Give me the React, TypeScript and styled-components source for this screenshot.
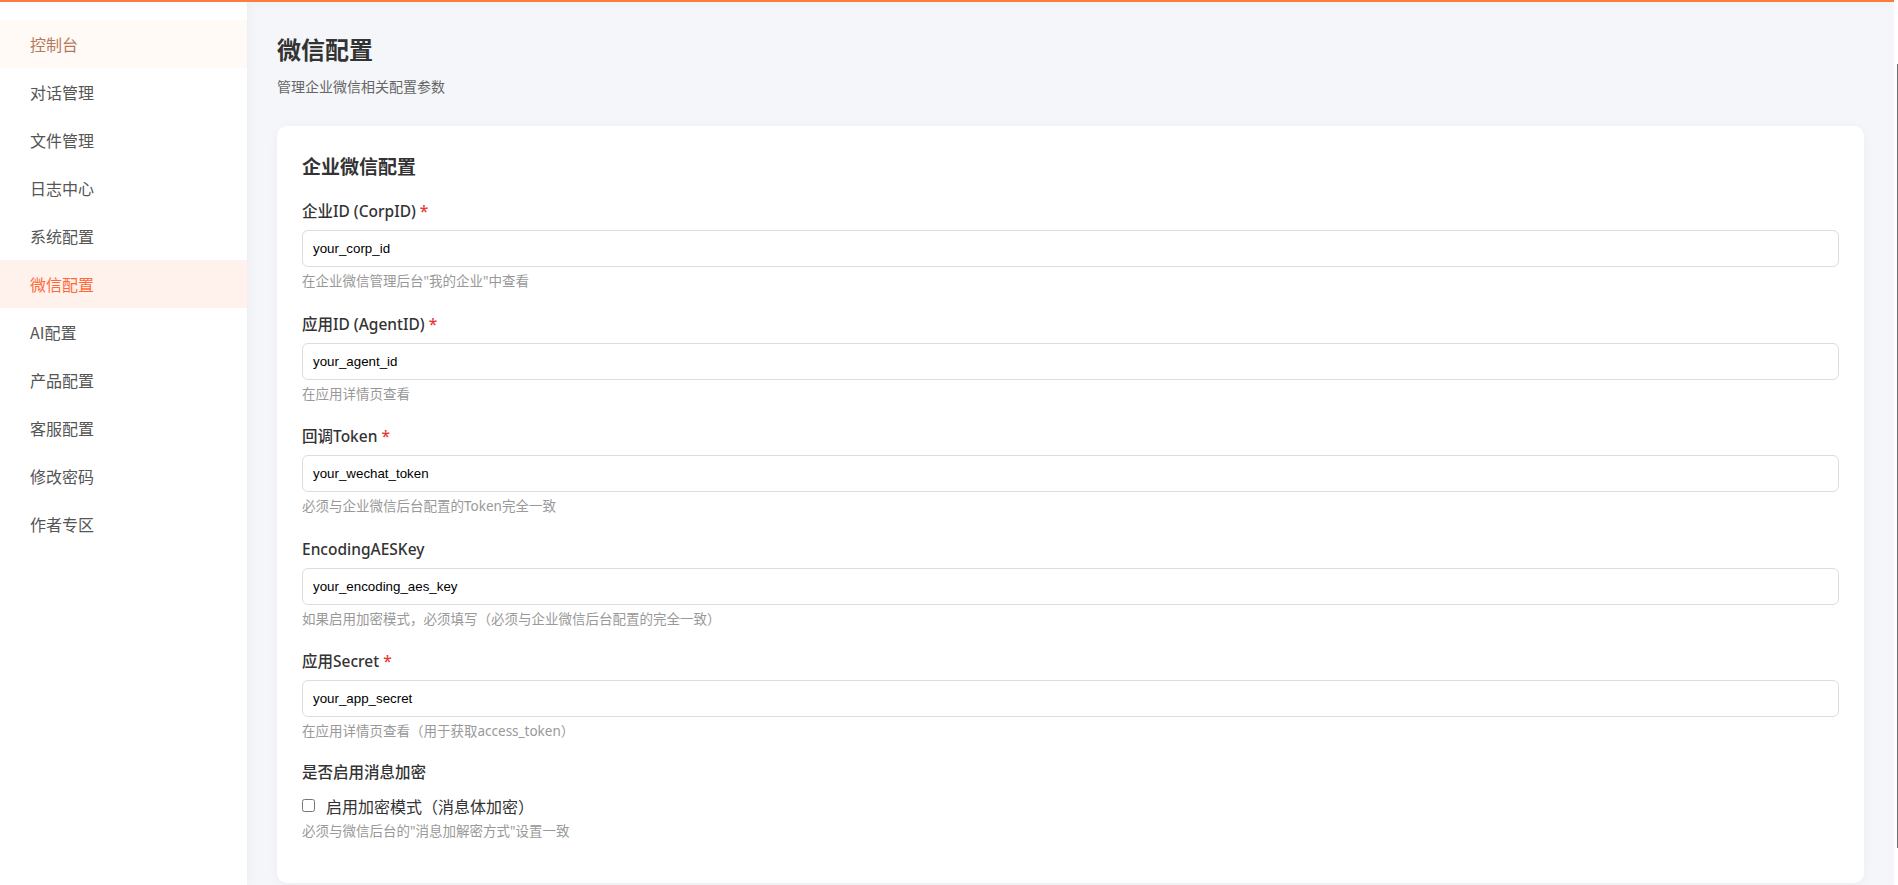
import React from "react";
import styled, { createGlobalStyle } from "styled-components";

const GlobalStyle = createGlobalStyle`
  html, body {
    margin: 0;
    padding: 0;
    height: 100%;
    overflow: hidden;
  }
  body {
    font-family: "Noto Sans", "Noto Sans CJK SC", sans-serif;
    background: #f5f6fa;
    color: #333;
  }
  * { box-sizing: border-box; }
`;

const Shell = styled.div`
  display: flex;
  height: 100vh;
  width: 100vw;
`;

const TopBar = styled.div`
  position: fixed;
  top: 0;
  left: 0;
  right: 4px;
  height: 2px;
  background: #ff7a3d;
  box-shadow: 0 2px 10px rgba(0, 0, 0, 0.06);
  z-index: 10;
`;

const Sidebar = styled.nav`
  width: 247px;
  flex-shrink: 0;
  background: #fff;
  padding-top: 20px;
  box-shadow: 2px 0 10px rgba(0, 0, 0, 0.04);
  position: relative;
  z-index: 2;
  display: flex;
  flex-direction: column;
`;

const MenuItem = styled.div<{ $state?: "active" | "hover" }>`
  height: 48px;
  display: flex;
  align-items: center;
  padding-left: 30px;
  font-size: 16px;
  font-family: "Noto Sans CJK SC", sans-serif;
  color: ${(p) =>
    p.$state === "active" ? "#ff6a3a" : p.$state === "hover" ? "#b8775a" : "#555"};
  background: ${(p) =>
    p.$state === "active" ? "#fff2ed" : p.$state === "hover" ? "#fffaf6" : "transparent"};
`;

const Main = styled.main`
  flex: 1;
  min-width: 0;
  height: 100vh;
  overflow-y: auto;
  padding: 31px 30px 30px 30px;
  scrollbar-width: none;
  &::-webkit-scrollbar {
    display: none;
  }
`;

const ScrollRail = styled.div`
  width: 4px;
  flex-shrink: 0;
  background: #fff;
  display: flex;
  flex-direction: column;
  align-items: flex-end;
  padding: 64px 0 37px;
`;

const ScrollThumb = styled.div`
  width: 1px;
  flex: 1;
  background: #6b6b6b;
`;

const PageTitle = styled.h1`
  margin: 0 0 9px;
  font-size: 24px;
  line-height: 36px;
  font-weight: 700;
  color: #333;
  font-family: "Noto Sans CJK SC", sans-serif;
`;

const PageSubtitle = styled.p`
  margin: 0;
  font-size: 14px;
  line-height: 21px;
  color: #666;
  font-family: "Noto Sans CJK SC", sans-serif;
`;

const Card = styled.section`
  margin-top: 29px;
  background: #fff;
  border-radius: 10px;
  box-shadow: 0 2px 12px rgba(0, 0, 0, 0.04);
  padding: 26px 25px 43px;
`;

const CardTitle = styled.h2`
  margin: 0 0 22px;
  font-size: 19px;
  line-height: 27px;
  font-weight: 700;
  color: #333;
  font-family: "Noto Sans CJK SC", sans-serif;
`;

const Field = styled.div<{ $gap?: number }>`
  display: flex;
  flex-direction: column;
  margin-bottom: ${(p) => p.$gap ?? 23.5}px;
`;

const Label = styled.label`
  font-size: 15.5px;
  line-height: 21px;
  font-weight: 500;
  color: #333;
  margin-bottom: 8px;
`;

const Required = styled.span`
  color: #e53935;
  margin-left: 4px;
`;

const TextInput = styled.input`
  height: 37px;
  width: 100%;
  border: 1px solid #ddd;
  border-radius: 6px;
  padding: 0 10px;
  font-family: "Liberation Sans", Arial, sans-serif;
  font-size: 13.333px;
  color: #000;
  background: #fff;
  outline: none;
`;

const Hint = styled.div<{ $top?: number }>`
  margin-top: ${(p) => p.$top ?? 5}px;
  font-size: 13.5px;
  line-height: 18px;
  color: #999;
  font-family: "Noto Sans", "Noto Sans CJK SC", sans-serif;
`;

const CheckRow = styled.label`
  display: flex;
  align-items: center;
  gap: 11px;
  height: 21px;
  margin-top: 4px;
  font-size: 16px;
  color: #333;
  font-family: "Noto Sans CJK SC", sans-serif;

  input {
    margin: 0;
    width: 13px;
    height: 13px;
  }
`;

const menu = [
  "控制台",
  "对话管理",
  "文件管理",
  "日志中心",
  "系统配置",
  "微信配置",
  "AI配置",
  "产品配置",
  "客服配置",
  "修改密码",
  "作者专区",
];

const fields = [
  { label: "企业ID (CorpID)", required: true, value: "your_corp_id", hint: "在企业微信管理后台\"我的企业\"中查看" },
  { label: "应用ID (AgentID)", required: true, value: "your_agent_id", hint: "在应用详情页查看" },
  { label: "回调Token", required: true, value: "your_wechat_token", hint: "必须与企业微信后台配置的Token完全一致" },
  { label: "EncodingAESKey", required: false, value: "your_encoding_aes_key", hint: "如果启用加密模式，必须填写（必须与企业微信后台配置的完全一致）" },
  { label: "应用Secret", required: true, value: "your_app_secret", hint: "在应用详情页查看（用于获取access_token）" },
];

export default function App() {
  return (
    <>
      <GlobalStyle />
      <TopBar />
      <Shell>
        <Sidebar>
          {menu.map((m, i) => (
            <MenuItem key={m} $state={i === 0 ? "hover" : m === "微信配置" ? "active" : undefined}>
              {m}
            </MenuItem>
          ))}
        </Sidebar>
        <Main>
          <PageTitle>微信配置</PageTitle>
          <PageSubtitle>管理企业微信相关配置参数</PageSubtitle>
          <Card>
            <CardTitle>企业微信配置</CardTitle>
            {fields.map((f, i) => (
              <Field key={f.label} $gap={i === fields.length - 1 ? 22 : 23.5}>
                <Label>
                  {f.label}
                  {f.required && <Required>*</Required>}
                </Label>
                <TextInput defaultValue={f.value} />
                <Hint>{f.hint}</Hint>
              </Field>
            ))}
            <Field $gap={0}>
              <Label>是否启用消息加密</Label>
              <CheckRow>
                <input type="checkbox" />
                启用加密模式（消息体加密）
              </CheckRow>
              <Hint $top={5.5}>必须与微信后台的"消息加解密方式"设置一致</Hint>
            </Field>
          </Card>
        </Main>
        <ScrollRail>
          <ScrollThumb />
        </ScrollRail>
      </Shell>
    </>
  );
}
